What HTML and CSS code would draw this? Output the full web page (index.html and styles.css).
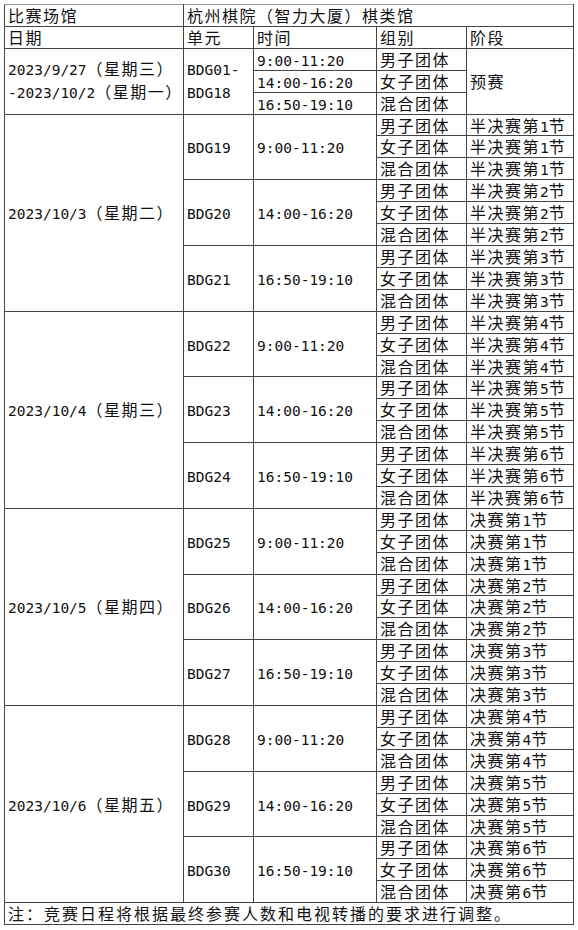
FILE: index.html
```html
<!DOCTYPE html>
<html lang="zh-CN">
<head>
<meta charset="utf-8">
<title>比赛日程</title>
<link rel="stylesheet" href="styles.css">
</head>
<body>
<table class="sched">
  <colgroup>
    <col class="c-date"><col class="c-unit"><col class="c-time"><col class="c-group"><col class="c-stage">
  </colgroup>
  <tbody>
    <tr class="top"><td>比赛场馆</td><td colspan="4">杭州棋院（智力大厦）棋类馆</td></tr>
    <tr><td>日期</td><td>单元</td><td>时间</td><td>组别</td><td>阶段</td></tr>

    <tr><td rowspan="3" class="two"><span class="n">2023/9/27</span>（星期三）<br><span class="n">-2023/10/2</span>（星期一）</td><td rowspan="3" class="two"><span class="n">BDG01-<br>BDG18</span></td><td><span class="n">9:00-11:20</span></td><td>男子团体</td><td rowspan="3">预赛</td></tr>
    <tr><td><span class="n">14:00-16:20</span></td><td>女子团体</td></tr>
    <tr><td><span class="n">16:50-19:10</span></td><td>混合团体</td></tr>

    <tr><td rowspan="9"><span class="n">2023/10/3</span>（星期二）</td><td rowspan="3"><span class="n">BDG19</span></td><td rowspan="3"><span class="n">9:00-11:20</span></td><td>男子团体</td><td>半决赛第<span class="n">1</span>节</td></tr>
    <tr><td>女子团体</td><td>半决赛第<span class="n">1</span>节</td></tr>
    <tr><td>混合团体</td><td>半决赛第<span class="n">1</span>节</td></tr>
    <tr><td rowspan="3"><span class="n">BDG20</span></td><td rowspan="3"><span class="n">14:00-16:20</span></td><td>男子团体</td><td>半决赛第<span class="n">2</span>节</td></tr>
    <tr><td>女子团体</td><td>半决赛第<span class="n">2</span>节</td></tr>
    <tr><td>混合团体</td><td>半决赛第<span class="n">2</span>节</td></tr>
    <tr><td rowspan="3"><span class="n">BDG21</span></td><td rowspan="3"><span class="n">16:50-19:10</span></td><td>男子团体</td><td>半决赛第<span class="n">3</span>节</td></tr>
    <tr><td>女子团体</td><td>半决赛第<span class="n">3</span>节</td></tr>
    <tr><td>混合团体</td><td>半决赛第<span class="n">3</span>节</td></tr>

    <tr><td rowspan="9"><span class="n">2023/10/4</span>（星期三）</td><td rowspan="3"><span class="n">BDG22</span></td><td rowspan="3"><span class="n">9:00-11:20</span></td><td>男子团体</td><td>半决赛第<span class="n">4</span>节</td></tr>
    <tr><td>女子团体</td><td>半决赛第<span class="n">4</span>节</td></tr>
    <tr><td>混合团体</td><td>半决赛第<span class="n">4</span>节</td></tr>
    <tr><td rowspan="3"><span class="n">BDG23</span></td><td rowspan="3"><span class="n">14:00-16:20</span></td><td>男子团体</td><td>半决赛第<span class="n">5</span>节</td></tr>
    <tr><td>女子团体</td><td>半决赛第<span class="n">5</span>节</td></tr>
    <tr><td>混合团体</td><td>半决赛第<span class="n">5</span>节</td></tr>
    <tr><td rowspan="3"><span class="n">BDG24</span></td><td rowspan="3"><span class="n">16:50-19:10</span></td><td>男子团体</td><td>半决赛第<span class="n">6</span>节</td></tr>
    <tr><td>女子团体</td><td>半决赛第<span class="n">6</span>节</td></tr>
    <tr><td>混合团体</td><td>半决赛第<span class="n">6</span>节</td></tr>

    <tr><td rowspan="9"><span class="n">2023/10/5</span>（星期四）</td><td rowspan="3"><span class="n">BDG25</span></td><td rowspan="3"><span class="n">9:00-11:20</span></td><td>男子团体</td><td>决赛第<span class="n">1</span>节</td></tr>
    <tr><td>女子团体</td><td>决赛第<span class="n">1</span>节</td></tr>
    <tr><td>混合团体</td><td>决赛第<span class="n">1</span>节</td></tr>
    <tr><td rowspan="3"><span class="n">BDG26</span></td><td rowspan="3"><span class="n">14:00-16:20</span></td><td>男子团体</td><td>决赛第<span class="n">2</span>节</td></tr>
    <tr><td>女子团体</td><td>决赛第<span class="n">2</span>节</td></tr>
    <tr><td>混合团体</td><td>决赛第<span class="n">2</span>节</td></tr>
    <tr><td rowspan="3"><span class="n">BDG27</span></td><td rowspan="3"><span class="n">16:50-19:10</span></td><td>男子团体</td><td>决赛第<span class="n">3</span>节</td></tr>
    <tr><td>女子团体</td><td>决赛第<span class="n">3</span>节</td></tr>
    <tr><td>混合团体</td><td>决赛第<span class="n">3</span>节</td></tr>

    <tr><td rowspan="9"><span class="n">2023/10/6</span>（星期五）</td><td rowspan="3"><span class="n">BDG28</span></td><td rowspan="3"><span class="n">9:00-11:20</span></td><td>男子团体</td><td>决赛第<span class="n">4</span>节</td></tr>
    <tr><td>女子团体</td><td>决赛第<span class="n">4</span>节</td></tr>
    <tr><td>混合团体</td><td>决赛第<span class="n">4</span>节</td></tr>
    <tr><td rowspan="3"><span class="n">BDG29</span></td><td rowspan="3"><span class="n">14:00-16:20</span></td><td>男子团体</td><td>决赛第<span class="n">5</span>节</td></tr>
    <tr><td>女子团体</td><td>决赛第<span class="n">5</span>节</td></tr>
    <tr><td>混合团体</td><td>决赛第<span class="n">5</span>节</td></tr>
    <tr><td rowspan="3"><span class="n">BDG30</span></td><td rowspan="3"><span class="n">16:50-19:10</span></td><td>男子团体</td><td>决赛第<span class="n">6</span>节</td></tr>
    <tr><td>女子团体</td><td>决赛第<span class="n">6</span>节</td></tr>
    <tr><td>混合团体</td><td>决赛第<span class="n">6</span>节</td></tr>

    <tr><td colspan="5" class="note">注：竞赛日程将根据最终参赛人数和电视转播的要求进行调整。</td></tr>
  </tbody>
</table>
</body>
</html>
```

FILE: styles.css
```css
html, body {
  background: #ffffff;
}
body {
  margin: 4px;
  color: #111111;
  font-family: "Noto Sans CJK SC", "Noto Sans", sans-serif;
  font-size: 16px;
}
.sched {
  border-collapse: collapse;
  table-layout: fixed;
  width: 569px;
}
.c-date { width: 179px; }
.c-unit { width: 70px; }
.c-time { width: 123px; }
.c-group { width: 90px; }
.c-stage { width: 107px; }
.sched td {
  border: 1px solid #444444;
  height: 20.9px;
  padding: 0 0 0 3px;
  line-height: 20.9px;
  letter-spacing: 1.5px;
  white-space: nowrap;
  overflow: hidden;
  vertical-align: middle;
  text-align: left;
}
.sched .top td {
  border-top-color: #9a9a9a;
}
.sched td.note {
  letter-spacing: 2px;
}
.n {
  font-family: "DejaVu Sans Mono", "Liberation Mono", monospace;
  font-size: 14.5px;
  line-height: 1;
  letter-spacing: 0;
}
.two .n {
  line-height: 20.9px;
}
```
